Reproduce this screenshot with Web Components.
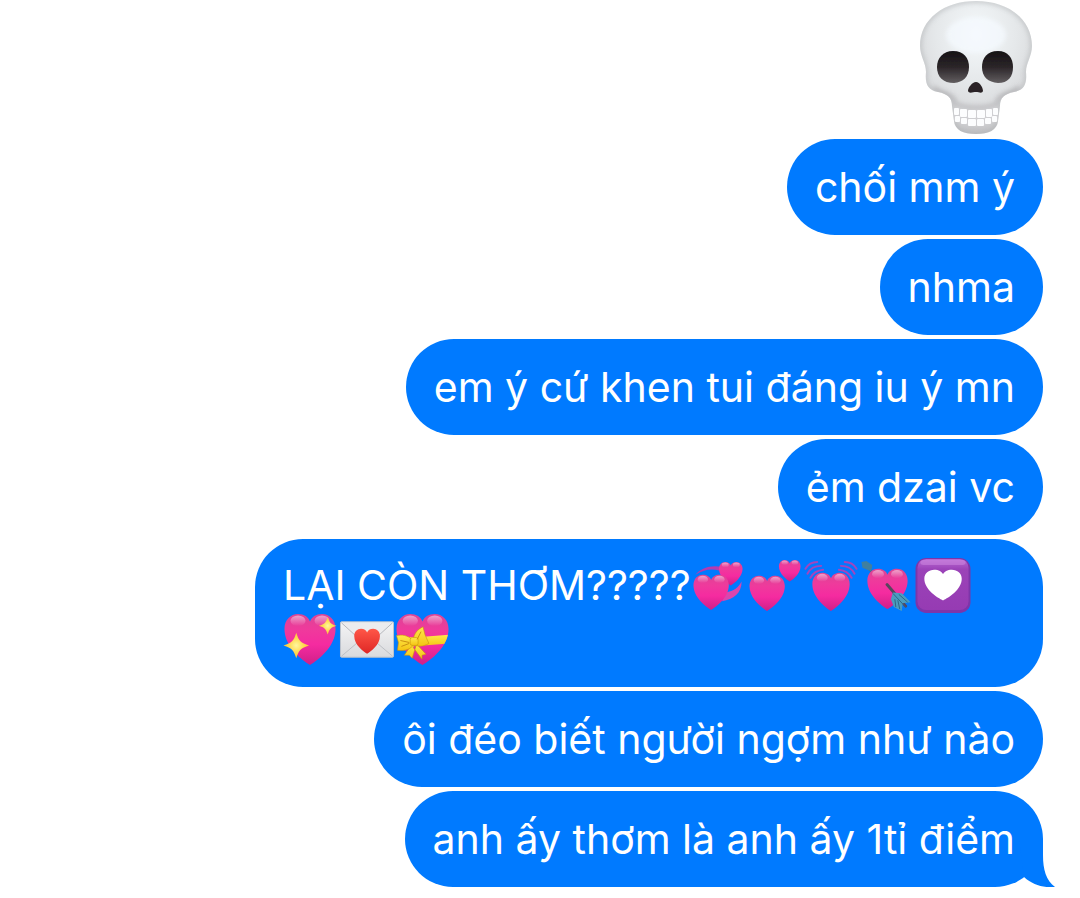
<!DOCTYPE html>
<html lang="vi">
<head>
<meta charset="utf-8">
<meta name="viewport" content="width=device-width, initial-scale=1">
<title>Messages</title>
<style>
body{
    margin:0;
    background:#fff;
}
</style>
</head>
<body>
<chat-thread>
    <chat-emoji name="skull" size="large"></chat-emoji>
    <chat-bubble>chối mm ý</chat-bubble>
    <chat-bubble>nhma</chat-bubble>
    <chat-bubble>em ý cứ khen tui đáng iu ý mn</chat-bubble>
    <chat-bubble>ẻm dzai vc</chat-bubble>
    <chat-bubble>LẠI CÒN THƠM?????<chat-emoji name="revolving"></chat-emoji><chat-emoji name="two"></chat-emoji><chat-emoji name="beating"></chat-emoji><chat-emoji name="arrow"></chat-emoji><chat-emoji name="decoration"></chat-emoji><chat-emoji name="sparkling"></chat-emoji><chat-emoji name="letter"></chat-emoji><chat-emoji name="ribbon"></chat-emoji></chat-bubble>
    <chat-bubble>ôi đéo biết người ngợm như nào</chat-bubble>
    <chat-bubble tail>anh ấy thơm là anh ấy 1tỉ điểm</chat-bubble>
</chat-thread>
<script>
class ChatThread extends HTMLElement {
    constructor() {
        super();
        const shadowRoot = this.attachShadow({ mode: 'open' });
        shadowRoot.innerHTML = `
        <style>
        :host{
            display:flex;
            flex-direction:column;
            align-items:flex-end;
            gap:4px;
            padding:0 37px 11px;
            font-family:Inter,"Liberation Sans",sans-serif;
            font-size:41px;
            line-height:55px;
        }
        </style>
        <slot></slot>
        `
    }
}

class ChatBubble extends HTMLElement {
    constructor() {
        super();
        const shadowRoot = this.attachShadow({ mode: 'open' });
        shadowRoot.innerHTML = `
        <style>
        :host{
            position:relative;
            box-sizing:border-box;
            display:flex;
            align-items:center;
            min-height:96px;
            max-width:788px;
            padding:19px 28px;
            border-radius:48px;
            color:#fff;
            background:var(--bubbleColor,#007aff);
        }
        .tail{
            display:none;
            position:absolute;
            right:-12px;
            bottom:0;
            width:48px;
            height:48px;
            fill:var(--bubbleColor,#007aff);
        }
        :host([tail]) .tail{
            display:block;
        }
        </style>
        <div><slot></slot></div>
        <svg class="tail" viewBox="0 0 48 48" aria-hidden="true"><path d="M36 0V16C36 31 39 41 48 48C36 49 26 46 17 38L12 0Z"/></svg>
        `
    }
}

const HEART = 'M17 34C12 31 0 22 0 10C0 4 4 0 9 0C13 0 16 2 17 5C18 2 21 0 25 0C30 0 34 4 34 10C34 22 22 31 17 34Z';

// a glossy heart scaled into the box x, y, w, h
const heart = (x, y, w, h = w, fill = 'url(#pink)') => `
    <g transform="translate(${x} ${y}) scale(${w / 34} ${h / 34})">
        <path d="${HEART}" fill="${fill}"/>
        <ellipse cx="9" cy="4.5" rx="5" ry="3.5" fill="url(#shine)"/>
        <ellipse cx="25" cy="4.5" rx="5" ry="3.5" fill="url(#shine)"/>
    </g>`;

const star = (x, y, r) => `<path transform="translate(${x} ${y}) scale(${r})" fill="url(#gold)" d="M0-1C.2-.35.35-.2 1 0C.35.2.2.35 0 1C-.2.35-.35.2-1 0C-.35-.2-.2-.35 0-1Z"/>`;

const defs = `
    <defs>
        <linearGradient id="pink" x1="0" y1="0" x2="0" y2="1">
            <stop offset="0" stop-color="#dc4595"/><stop offset=".3" stop-color="#ef3a9c"/><stop offset=".6" stop-color="#f52ba0"/><stop offset="1" stop-color="#cf1f88"/>
        </linearGradient>
        <linearGradient id="shine" x1="0" y1="0" x2="0" y2="1">
            <stop offset="0" stop-color="#fff" stop-opacity=".5"/><stop offset="1" stop-color="#fff" stop-opacity="0"/>
        </linearGradient>
        <radialGradient id="gold">
            <stop offset="0" stop-color="#fff6a0"/><stop offset=".5" stop-color="#ffdc58"/><stop offset="1" stop-color="#ffc233"/>
        </radialGradient>
        <linearGradient id="red" x1="0" y1="0" x2="0" y2="1">
            <stop offset="0" stop-color="#ff5748"/><stop offset="1" stop-color="#df2725"/>
        </linearGradient>
        <linearGradient id="purple" x1="0" y1="0" x2="0" y2="1">
            <stop offset="0" stop-color="#b96ad4"/><stop offset=".2" stop-color="#9b43b8"/><stop offset="1" stop-color="#963bb3"/>
        </linearGradient>
        <linearGradient id="paper" x1="0" y1="0" x2="0" y2="1">
            <stop offset="0" stop-color="#f4f4f5"/><stop offset="1" stop-color="#d9dadd"/>
        </linearGradient>
        <linearGradient id="yellow" x1="0" y1="0" x2="0" y2="1">
            <stop offset="0" stop-color="#ffe84a"/><stop offset="1" stop-color="#f4c414"/>
        </linearGradient>
        <radialGradient id="bone" cx=".5" cy=".25" r=".8">
            <stop offset="0" stop-color="#f5f9fb"/><stop offset=".45" stop-color="#e5e8ea"/><stop offset=".8" stop-color="#d6d7d9"/><stop offset="1" stop-color="#b5b4b7"/>
        </radialGradient>
        <linearGradient id="socket" x1="0" y1="0" x2="0" y2="1">
            <stop offset="0" stop-color="#161214"/><stop offset=".5" stop-color="#2b2629"/><stop offset="1" stop-color="#625e60"/>
        </linearGradient>
        <filter id="soft" x="-20%" y="-20%" width="140%" height="140%"><feGaussianBlur stdDeviation="2"/></filter>
        <filter id="edge" x="-10%" y="-10%" width="120%" height="120%"><feGaussianBlur stdDeviation=".7"/></filter>
    </defs>`;

const SKULL = 'M69 1C101 1 125 19 125 46C125 56 119 63 119 72C120 83 118 90 107 92C97 94 93 98 93 106L91 121C90 130 82 134 69 134C56 134 48 130 47 121L45 106C45 98 41 94 31 92C20 90 18 83 19 72C19 63 13 56 13 46C13 19 37 1 69 1Z';

const emojis = {
    skull: {
        label: 'skull',
        box: '0 0 136 135',
        draw: `
        <clipPath id="skull"><path d="${SKULL}"/></clipPath>
        <path d="${SKULL}" fill="url(#bone)"/>
        <g clip-path="url(#skull)">
            <path d="${SKULL}" fill="none" stroke="#b2b5b7" stroke-width="4" opacity=".6" filter="url(#soft)"/>
            <path d="M27 87C35 97 45 91 49 104C59 109 80 109 89 104C93 91 103 97 112 87" fill="none" stroke="#aaa9ac" stroke-width="5" opacity=".5" filter="url(#soft)"/>
            <ellipse cx="69" cy="35" rx="30" ry="18" fill="#f5faff" opacity=".7" filter="url(#soft)"/>
        </g>
        <g filter="url(#edge)">
            <path d="M46 51C57 51 62 58 62 67C62 77 56 82 47 83C36 83 30 77 30 67C30 58 36 51 46 51Z" fill="url(#socket)"/>
            <path d="M91 51C101 51 106 58 106 67C106 77 101 83 91 83C81 82 75 77 75 67C75 58 80 51 91 51Z" fill="url(#socket)"/>
            <path d="M69 82C73 82 76 88 76 91C75 94 72 92 69 92C66 92 62 94 61 91C61 88 65 82 69 82Z" fill="#292325"/>
        </g>
        <path d="M47 108Q69 114 91 108V121Q69 130 47 121Z" fill="#cfcfd2"/>
        <g fill="#fcfdfe">
            <rect x="47" y="108" width="5" height="7" rx="1"/><rect x="53" y="109" width="7" height="8" rx="1"/>
            <rect x="61" y="110" width="8" height="8" rx="1"/><rect x="70" y="110" width="8" height="8" rx="1"/>
            <rect x="79" y="109" width="6" height="8" rx="1"/><rect x="86" y="108" width="5" height="7" rx="1"/>
            <rect x="48" y="116" width="5" height="6" rx="1"/><rect x="54" y="118" width="6" height="6" rx="1"/>
            <rect x="61" y="119" width="8" height="7" rx="1"/><rect x="70" y="119" width="7" height="7" rx="1"/>
            <rect x="78" y="118" width="6" height="6" rx="1"/><rect x="85" y="116" width="5" height="6" rx="1"/>
        </g>`
    },
    revolving: {
        label: 'revolving hearts',
        draw: `
        <path d="M4 17C10 10 19 7 31 9L29 13C20 10 12 12 4 17Z" fill="#b43bb0"/>
        <path d="M51 24C51 36 43 42 31 44L35 35C43 34 48 30 51 24Z" fill="#d946ae"/>
        ${heart(28, 4, 24)}${heart(2, 17, 36)}`
    },
    two: {
        label: 'two hearts',
        draw: `${heart(2, 18, 36)}${heart(32, 2, 22)}`
    },
    beating: {
        label: 'beating heart',
        draw: `
        <g fill="none" stroke="#a345bd" stroke-width="2" stroke-linecap="round">
            <path d="M2 11Q6 4 14 4M4 16Q8 8 18 8M7 20Q11 13 20 12"/>
            <path d="M54 11Q50 4 42 4M52 16Q48 8 38 8M49 20Q45 13 36 12"/>
        </g>
        ${heart(9, 15, 38, 39)}`
    },
    arrow: {
        label: 'heart with arrow',
        draw: `
        <path d="M6 7L14 16" stroke="#385e72" stroke-width="2"/>
        <path d="M2 4L7 3L13 7L12 14L8 12L3 10Z" fill="#407f9f"/>
        ${heart(8, 11, 41, 41)}
        <path d="M28 27L47 49" stroke="#58465e" stroke-width="3" stroke-linecap="round"/>
        <path d="M34 35L43 36L52 45L44 46L43 54L35 50L32 42Z" fill="#4b9cbf"/>
        <path d="M34 36L47 50M36 42L37 50M39 43L41 52M40 37L49 45" stroke="#2e6685" stroke-width="1"/>`
    },
    decoration: {
        label: 'heart decoration',
        draw: `
        <rect width="56" height="56" rx="11" fill="#7d35a9"/>
        <rect x="2" y="1" width="52" height="52" rx="9" fill="url(#purple)"/>
        <rect x="5" y="2" width="46" height="5" rx="3" fill="#cf8be2" opacity=".5"/>
        <path d="${HEART}" transform="translate(9 12) scale(1.12 .92)" fill="#fff"/>`
    },
    sparkling: {
        label: 'sparkling heart',
        draw: `${heart(1, 1, 52)}${star(13, 33, 13)}${star(45, 13, 9)}`
    },
    letter: {
        label: 'love letter',
        draw: `
        <rect x="1" y="9" width="54" height="36" rx="1" fill="url(#paper)" stroke="#bfc3ca" stroke-width="1"/>
        <path d="M2 44L22 27M54 44L34 27" stroke="#bdbfc4" stroke-width="1"/>
        <path d="M2 10L24 30Q28 33 32 30L54 10" fill="#ececee" stroke="#b6b8bd" stroke-width="1"/>
        <path d="${HEART}" transform="translate(15 16) scale(.77 .75)" fill="url(#red)"/>`
    },
    ribbon: {
        label: 'heart with ribbon',
        draw: `
        <clipPath id="wrap"><path d="${HEART}" transform="translate(1 1) scale(1.56 1.53)"/></clipPath>
        ${heart(1, 1, 53, 52)}
        <path d="M0 25Q28 25 56 22V31Q28 34 0 34Z" fill="url(#yellow)" clip-path="url(#wrap)"/>
        <g fill="url(#yellow)" stroke="#c98e10" stroke-width=".6" stroke-linejoin="round">
            <path d="M17 31L9 43L14 43L17 46L21 33ZM21 31L31 42L27 43L27 47L18 35Z"/>
            <path d="M18 28C12 22 6 22 1 23L3 30L2 38C10 39 15 37 19 32Z"/>
            <path d="M18 27C19 21 22 17 28 14L30 22L34 31C27 35 23 34 19 32Z"/>
            <rect x="15" y="25" width="8" height="8" rx="2"/>
        </g>
        <path d="M5 28L14 30M6 34L14 31M26 19L22 27" stroke="#c98e10" stroke-width="1"/>`
    }
};

class ChatEmoji extends HTMLElement {
    constructor() {
        super();
        const shadowRoot = this.attachShadow({ mode: 'open' });
        const emoji = emojis[this.getAttribute('name')];
        shadowRoot.innerHTML = `
        <style>
        :host{
            display:inline-block;
            width:56px;
            height:55px;
            vertical-align:top;
        }
        :host([size=large]){
            width:136px;
            height:135px;
        }
        svg{
            display:block;
            width:100%;
            height:100%;
        }
        </style>
        <svg role="img" aria-label="${emoji.label}" viewBox="${emoji.box || '0 0 56 56'}">${defs}${emoji.draw}</svg>
        `
    }
}

customElements.define('chat-thread', ChatThread);
customElements.define('chat-bubble', ChatBubble);
customElements.define('chat-emoji', ChatEmoji);
</script>
</body>
</html>
